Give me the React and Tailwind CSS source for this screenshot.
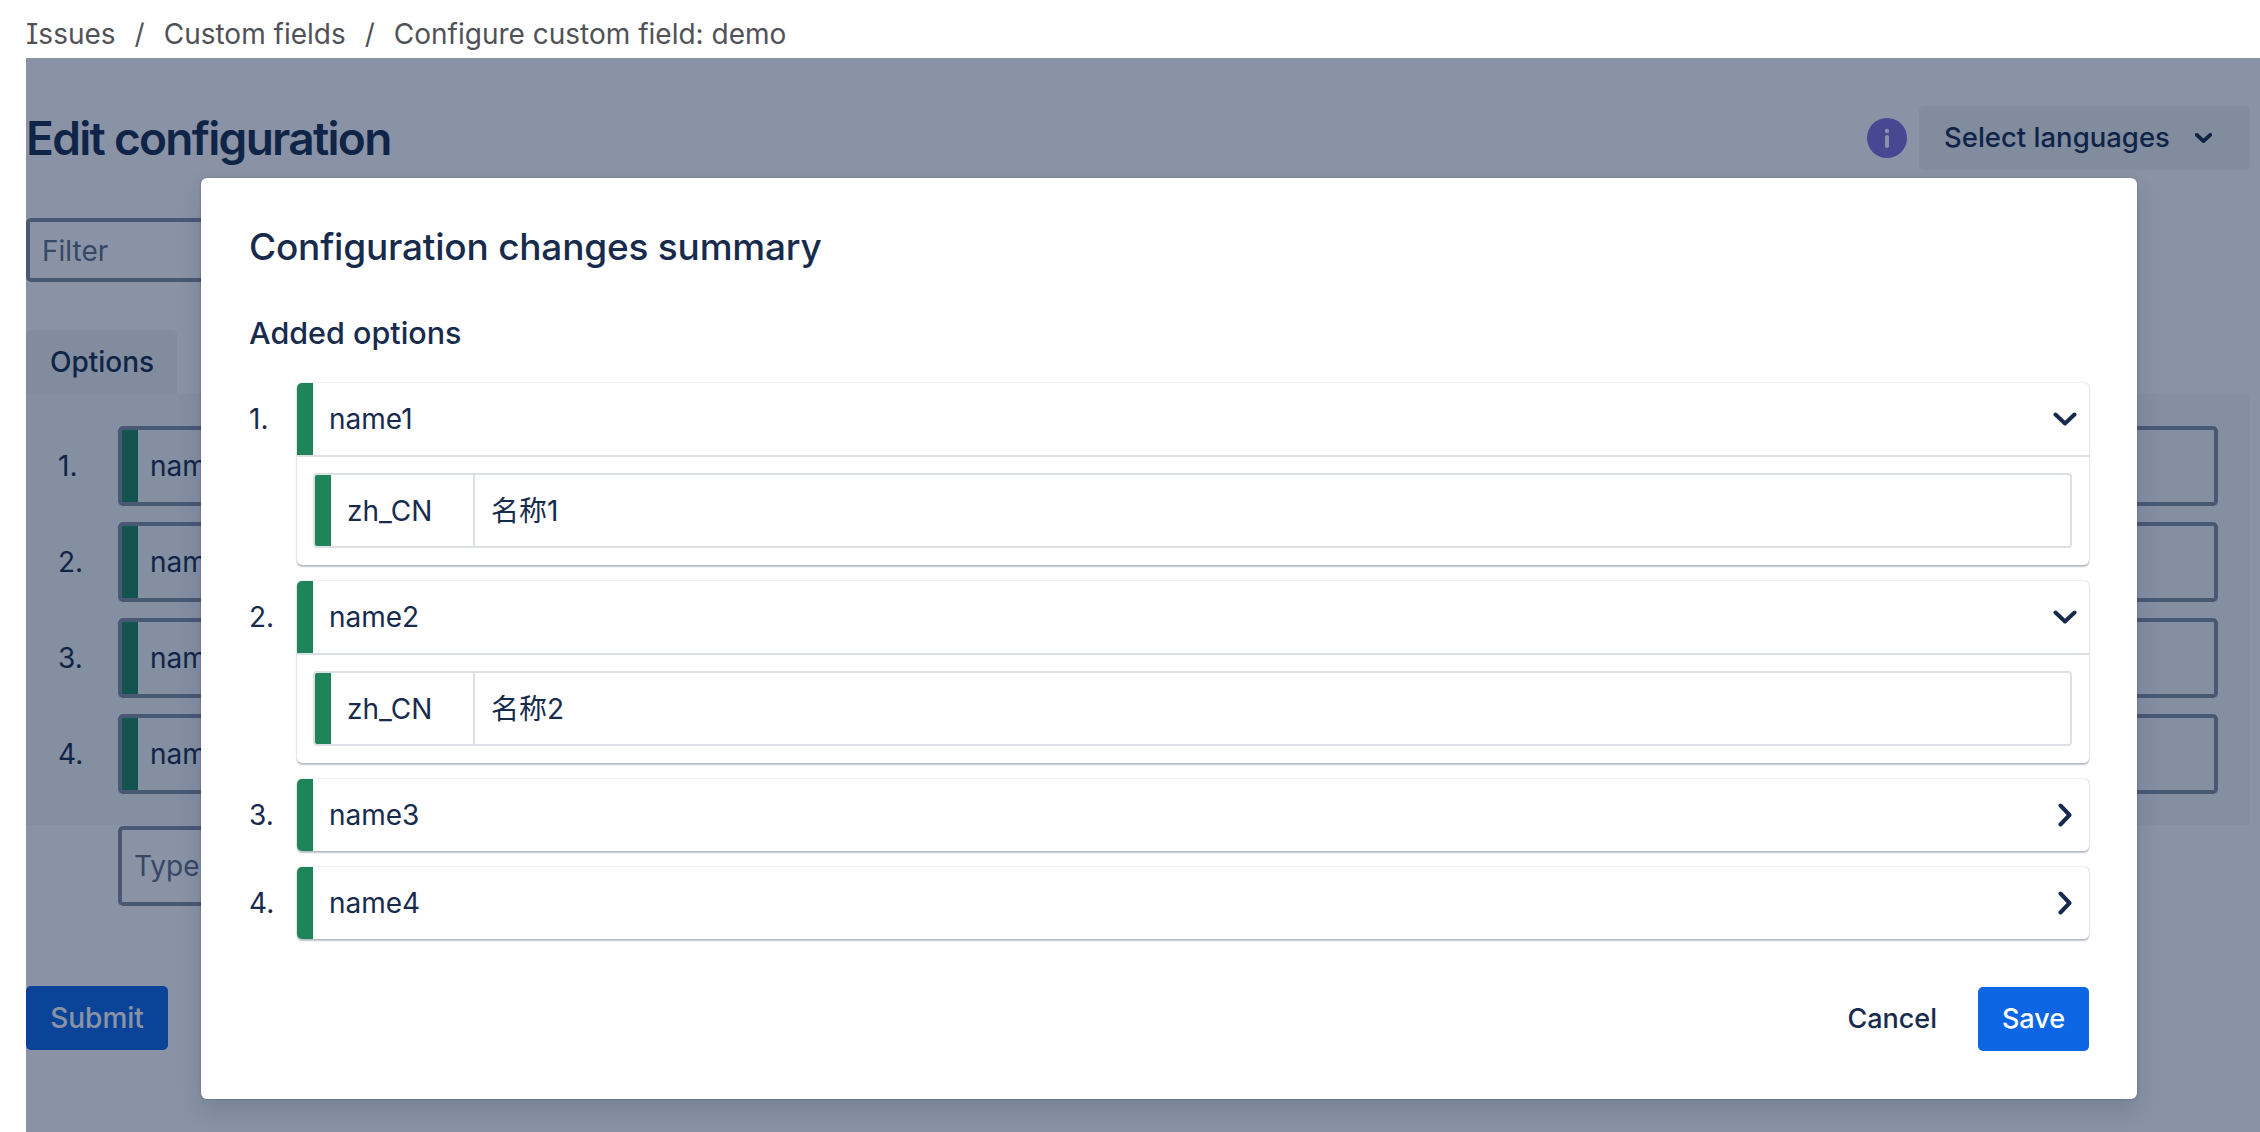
import React from "react";

const summaryOptions = [
  { id: 1, name: "name1", open: true, translation: "名称1" },
  { id: 2, name: "name2", open: true, translation: "名称2" },
  { id: 3, name: "name3", open: false },
  { id: 4, name: "name4", open: false },
];

const ChevronDown = ({ className, weight = 4 }) => (
  <svg className={className} viewBox="0 0 24 14" fill="none" stroke="currentColor" strokeWidth={weight} strokeLinecap="round" strokeLinejoin="round">
    <path d="M2.500 2.500 12 11.500l9.500-9" />
  </svg>
);

const ChevronRight = ({ className }) => (
  <svg className={className} viewBox="0 0 14 24" fill="none" stroke="currentColor" strokeWidth="4" strokeLinecap="round" strokeLinejoin="round">
    <path d="M2.500 2.500 11.500 12l-9 9.500" />
  </svg>
);

const InfoIcon = () => (
  <svg className="h-10 w-10" viewBox="0 0 40 40">
    <circle cx="20" cy="20" r="20" fill="#8270db" />
    <circle cx="20" cy="13" r="2.200" fill="#ffffff" />
    <rect x="18" y="17" width="4" height="13" rx="2" fill="#ffffff" />
  </svg>
);

// Page under the blanket
const BackgroundPage = () => (
  <div className="ml-[26px]">
    <div className="mt-[48px] flex h-[64px] items-center justify-between pr-[10px]">
      <h1 className="text-[46px] font-semibold tracking-[-1.7px] text-[#172b4d]">Edit configuration</h1>
      <div className="flex items-center gap-[12px]">
        <InfoIcon />
        <button className="flex h-[64px] w-[331px] items-center rounded-[5px] bg-[#f1f2f4] pl-[25px] text-[27.500px] font-medium text-[#172b4d]">
          Select languages
          <ChevronDown className="ml-[25px] h-[10px] w-[17px]" weight={5.500} />
        </button>
      </div>
    </div>
    <div className="mt-[48px] flex h-[64px] w-[500px] items-center rounded-[5px] border-4 border-[#8590a2] pl-[12px] pt-[1px] text-[28px] text-[#626f86]">
      Filter
    </div>
    <div className="mt-[48px] flex h-[64px] w-[151px] items-center rounded-t-[5px] bg-[#f1f2f4] pl-[24px] text-[28px] font-medium text-[#172b4d]">
      Options
    </div>
    <div className="mr-[10px] h-[431px] bg-[#f7f8f9] px-[32px] pt-[32px]">
      <div className="flex flex-col gap-[16px]">
        {summaryOptions.map((o) => (
          <div key={o.id} className="flex h-[80px] items-center">
            <span className="w-[60px] text-[28px] text-[#172b4d]">{o.id}.</span>
            <div className="flex h-full flex-1 items-stretch rounded-[5px] border-4 border-[#8590a2]">
              <div className="w-[16px] bg-[#1f845a]" />
              <div className="flex items-center pl-[12px] text-[28px] text-[#172b4d]">{o.name}</div>
            </div>
          </div>
        ))}
      </div>
    </div>
    <div className="ml-[92px] mt-[1px] flex h-[80px] w-[1000px] items-center rounded-[5px] border-4 border-[#8590a2] pl-[12px] text-[28px] text-[#626f86]">
      Type
    </div>
    <button className="mt-[80px] flex h-[64px] w-[142px] items-center justify-center rounded-[5px] bg-[#0c66e4] text-[28px] font-medium text-white">
      Submit
    </button>
  </div>
);

const SummaryRow = ({ option }) => (
  <div className="flex">
    <div className="flex h-[72px] w-[48px] shrink-0 items-center text-[28px] text-[#172b4d]">{option.id}.</div>
    <div className="flex-1 overflow-hidden rounded-[5px] bg-white shadow-[0_1.5px_1.5px_rgba(9,30,66,0.25),0_0_1.5px_rgba(9,30,66,0.31)]">
      <div className={option.open ? "flex h-[74px] items-center border-b-2 border-[#dcdfe4]" : "flex h-[72px] items-center"}>
        <div className="h-full w-[16px] bg-[#1f845a]" />
        <span className="ml-[16px] flex-1 text-[28px] text-[#172b4d]">{option.name}</span>
        {option.open ? (
          <ChevronDown className="mr-[12px] h-[14px] w-[24px] text-[#172b4d]" />
        ) : (
          <ChevronRight className="mr-[17px] h-[24px] w-[14px] text-[#172b4d]" />
        )}
      </div>
      {option.open && (
        <div className="pb-[17px] pl-[16px] pr-[17px] pt-[16px]">
          <div className="flex h-[75px] overflow-hidden rounded-[4px] border-2 border-[#dcdfe4]">
            <div className="w-[16px] bg-[#1f845a]" />
            <div className="flex w-[144px] items-center border-r-2 border-[#dcdfe4] pl-[16px] text-[28px] text-[#172b4d]">zh_CN</div>
            <div className="flex items-center pl-[16px] text-[28px] text-[#172b4d]">{option.translation}</div>
          </div>
        </div>
      )}
    </div>
  </div>
);

const App = () => {
  return (
    <div className="relative h-screen overflow-hidden bg-white font-['Inter','Noto_Sans_CJK_SC',sans-serif]">
      <div className="flex h-[58px] items-center gap-[19px] pl-[26px] pt-[10px] text-[28px] text-[#505258] [font-feature-settings:'cv08']">
        <span>Issues</span>
        <span>/</span>
        <span>Custom fields</span>
        <span>/</span>
        <span>Configure custom field: demo</span>
      </div>
      <BackgroundPage />

      {/* Blanket + dialog */}
      <div className="absolute bottom-0 left-[26px] right-0 top-[58px] bg-[rgba(9,30,66,0.48)] pl-[175px] pt-[120px]">
        <div className="flex h-[921px] w-[1936px] flex-col rounded-[6px] bg-white px-[48px] pt-[49px] shadow-[0_12px_24px_rgba(9,30,66,0.15),0_0_2px_rgba(9,30,66,0.31)]">
          <h2 className="text-[37px] font-[550] leading-[40px] tracking-[-0.2px] text-[#172b4d]">Configuration changes summary</h2>
          <h3 className="mt-[48px] text-[30.500px] font-medium leading-[36px] text-[#172b4d]">Added options</h3>
          <div className="mt-[32px] flex flex-col gap-[16px]">
            {summaryOptions.map((o) => (
              <SummaryRow key={o.id} option={o} />
            ))}
          </div>
          <div className="mt-[48px] flex items-center justify-end gap-[41px]">
            <button className="text-[27px] font-medium text-[#172b4d]">Cancel</button>
            <button className="flex h-[64px] w-[111px] items-center justify-center rounded-[5px] bg-[#0c66e4] text-[27px] font-medium text-white">
              Save
            </button>
          </div>
        </div>
      </div>
    </div>
  );
};

export default App;
